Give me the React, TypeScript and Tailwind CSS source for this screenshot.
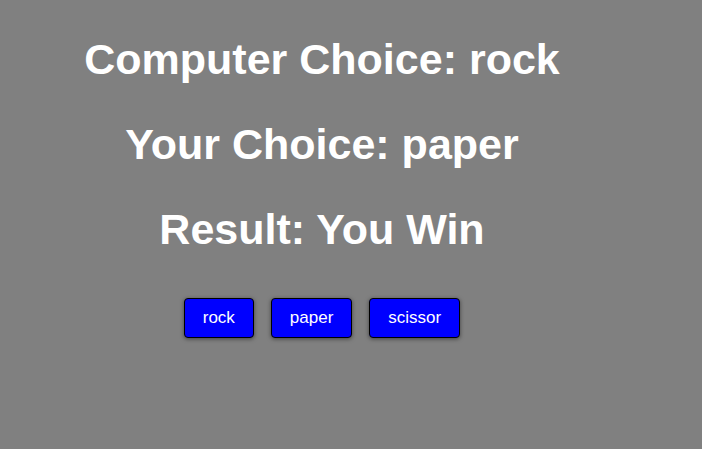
export default function App() {
  return (
    <div className="min-h-[449px] w-full bg-[#808080] font-['Liberation_Sans',Arial,sans-serif]">
      <div className="w-[644px] flex flex-col items-center pt-[31px]">
        <h1 className="text-[43px] leading-[56px] font-bold text-white">Computer Choice: rock</h1>
        <h1 className="mt-[29px] text-[43px] leading-[56px] font-bold text-white">Your Choice: paper</h1>
        <h1 className="mt-[29px] text-[43px] leading-[56px] font-bold text-white">Result: You Win</h1>
        <div className="mt-[41px] flex gap-[17px]">
          <button className="h-[40px] px-[18px] bg-[#0000ff] text-white text-[17px] border border-black rounded-[4px] shadow-[0_1px_4px_rgba(0,0,0,0.5)]">rock</button>
          <button className="h-[40px] px-[18px] bg-[#0000ff] text-white text-[17px] border border-black rounded-[4px] shadow-[0_1px_4px_rgba(0,0,0,0.5)]">paper</button>
          <button className="h-[40px] px-[18px] bg-[#0000ff] text-white text-[17px] border border-black rounded-[4px] shadow-[0_1px_4px_rgba(0,0,0,0.5)]">scissor</button>
        </div>
      </div>
    </div>
  )
}
